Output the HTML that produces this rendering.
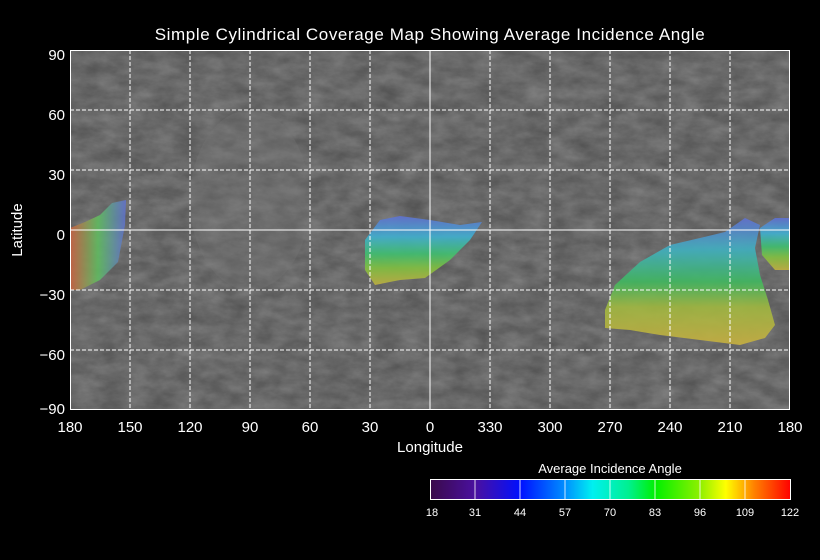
<!DOCTYPE html>
<html><head><style>
html,body{margin:0;padding:0;background:#000;width:820px;height:560px;overflow:hidden}
svg{display:block}
text{font-family:"Liberation Sans","DejaVu Sans",sans-serif;fill:#fff}
</style></head><body>
<svg width="820" height="560" viewBox="0 0 820 560">
<defs>
<filter id="tex" x="0" y="0" width="100%" height="100%">
<feTurbulence type="fractalNoise" baseFrequency="0.04 0.08" numOctaves="4" seed="3"/>
<feColorMatrix type="matrix" values="0 0 0 0 0.22  0 0 0 0 0.22  0 0 0 0 0.22  1.2 0 0 0 -0.1"/>
<feComposite in2="SourceGraphic" operator="in"/>
</filter>
<linearGradient id="cb" x1="0" x2="1">
<stop offset="0" stop-color="#3a0a4a"/><stop offset="0.125" stop-color="#4a10a0"/>
<stop offset="0.25" stop-color="#0010ff"/><stop offset="0.375" stop-color="#0090ff"/>
<stop offset="0.45" stop-color="#00f0f0"/><stop offset="0.55" stop-color="#00f090"/>
<stop offset="0.625" stop-color="#00f000"/><stop offset="0.75" stop-color="#90f000"/>
<stop offset="0.82" stop-color="#ffff00"/><stop offset="0.9" stop-color="#ff8000"/>
<stop offset="1" stop-color="#ff0000"/>
</linearGradient>
<linearGradient id="b1" x1="0" y1="0" x2="0" y2="1">
<stop offset="0" stop-color="#6070d0"/><stop offset="0.3" stop-color="#40b0d0"/>
<stop offset="0.55" stop-color="#40c070"/><stop offset="0.75" stop-color="#80c040"/><stop offset="1" stop-color="#c0b040"/>
</linearGradient>
<linearGradient id="b2" x1="0" y1="0" x2="0" y2="1">
<stop offset="0" stop-color="#6070d0"/><stop offset="0.25" stop-color="#40b0c0"/>
<stop offset="0.5" stop-color="#40b860"/><stop offset="0.7" stop-color="#a0b840"/><stop offset="1" stop-color="#c8b040"/>
</linearGradient>
<linearGradient id="b3" x1="0" y1="0" x2="1" y2="0">
<stop offset="0" stop-color="#d06040"/><stop offset="0.5" stop-color="#60c060"/><stop offset="1" stop-color="#6070d0"/>
</linearGradient>
</defs>
<rect x="70" y="50" width="720" height="360" fill="#555"/>
<rect x="70" y="50" width="720" height="360" fill="#555" filter="url(#tex)" opacity="0.9"/>
<ellipse cx="250" cy="200" rx="60" ry="90" fill="#777" opacity="0.3"/>
<path d="M70 228 L85 222 L100 215 L112 203 L126 200 L125 225 L118 262 L100 280 L80 290 L70 290 Z" fill="url(#b3)" opacity="0.85"/>
<path d="M365 240 L380 220 L400 216 L430 220 L460 225 L482 222 L470 240 L450 260 L425 278 L400 280 L375 285 L365 270 Z" fill="url(#b1)" opacity="0.9"/>
<path d="M605 310 L615 285 L640 262 L670 245 L700 238 L725 232 L745 218 L760 225 L755 248 L760 275 L768 300 L775 325 L765 338 L740 345 L700 340 L660 335 L630 330 L605 328 Z" fill="url(#b2)" opacity="0.9"/>
<path d="M760 228 L775 218 L790 218 L790 270 L775 270 L762 255 Z" fill="url(#b1)" opacity="0.9"/>
<g stroke="#fff" stroke-width="1" stroke-dasharray="4,2" fill="none">
<path d="M130 50V410M190 50V410M250 50V410M310 50V410M370 50V410M490 50V410M550 50V410M610 50V410M670 50V410M730 50V410"/>
<path d="M70 110H790M70 170H790M70 290H790M70 350H790"/>
</g>
<path d="M430 50V410M70 230H790" stroke="#fff" stroke-width="1"/>
<rect x="70.5" y="50.5" width="719" height="359" fill="none" stroke="#fff" stroke-width="1"/>
<text x="430" y="40" font-size="17" text-anchor="middle" letter-spacing="0.6">Simple Cylindrical Coverage Map Showing Average Incidence Angle</text>
<g font-size="15" text-anchor="end">
<text x="65" y="60">90</text><text x="65" y="120">60</text><text x="65" y="180">30</text>
<text x="65" y="240">0</text><text x="65" y="300">−30</text><text x="65" y="360">−60</text><text x="65" y="414">−90</text>
</g>
<g font-size="15" text-anchor="middle">
<text x="70" y="432">180</text><text x="130" y="432">150</text><text x="190" y="432">120</text><text x="250" y="432">90</text>
<text x="310" y="432">60</text><text x="370" y="432">30</text><text x="430" y="432">0</text><text x="490" y="432">330</text>
<text x="550" y="432">300</text><text x="610" y="432">270</text><text x="670" y="432">240</text><text x="730" y="432">210</text><text x="790" y="432">180</text>
</g>
<text x="430" y="452" font-size="15" text-anchor="middle">Longitude</text>
<text x="22" y="230" font-size="15" text-anchor="middle" transform="rotate(-90 22 230)">Latitude</text>
<text x="610" y="473" font-size="13" text-anchor="middle">Average Incidence Angle</text>
<rect x="430.5" y="479.5" width="360" height="20" fill="url(#cb)" stroke="#fff"/>
<path d="M475 480V499M520 480V499M565 480V499M610 480V499M655 480V499M700 480V499M745 480V499" stroke="#fff" stroke-width="1" opacity="0.8"/>
<g font-size="11" text-anchor="middle">
<text x="432" y="516">18</text><text x="475" y="516">31</text><text x="520" y="516">44</text><text x="565" y="516">57</text>
<text x="610" y="516">70</text><text x="655" y="516">83</text><text x="700" y="516">96</text><text x="745" y="516">109</text><text x="790" y="516">122</text>
</g>
</svg>
</body></html>
